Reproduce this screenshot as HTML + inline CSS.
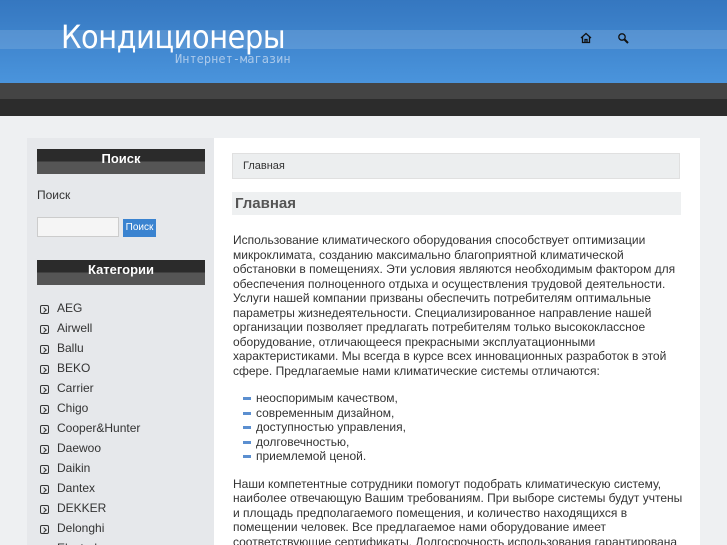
<!DOCTYPE html><html><head><meta charset="utf-8"><style>
html,body{margin:0;width:727px;height:545px;overflow:hidden;}
body{background:#eef0f2;font-family:"Liberation Sans","DejaVu Sans",sans-serif;position:relative;}
.hdr{position:absolute;left:0;top:0;width:727px;height:83px;background:linear-gradient(#3577c0,#4a94dc);}
.band{position:absolute;left:0;top:30px;width:727px;height:19px;background:rgba(255,255,255,.13);}
.title{position:absolute;left:61px;top:18px;color:#fff;font-size:32px;font-family:"DejaVu Sans Condensed","Liberation Sans Narrow",sans-serif;letter-spacing:-0.4px;}
.sub{position:absolute;left:175px;top:52px;color:#a9c8ea;font-size:12px;font-family:"DejaVu Sans Mono",monospace;}
.bar1{position:absolute;top:83px;left:0;width:727px;height:16px;background:#444;}
.bar2{position:absolute;top:99px;left:0;width:727px;height:17px;background:#2c2c2c;}
.side{position:absolute;left:27px;top:138px;width:187px;height:420px;background:#e6e8eb;}
.main{position:absolute;left:214px;top:138px;width:486px;height:420px;background:#fff;}
.sh{position:absolute;left:10px;width:168px;height:25px;background:linear-gradient(#2b2b2b 50%,#555 50%);color:#fff;font-weight:bold;font-size:13px;text-align:center;line-height:20px;}
.lbl{position:absolute;left:10px;top:50px;font-size:12px;color:#333;}
.inp{position:absolute;left:10px;top:79px;width:80px;height:18px;background:#f5f5f5;border:1px solid #ccc;}
.btn{position:absolute;left:96px;top:81px;width:33px;height:18px;background:#3a83d0;color:#fff;font-size:10px;line-height:18px;text-align:center;}
.cats{position:absolute;left:10px;top:162px;margin:0;padding:0;list-style:none;font-size:12px;color:#333;}
.cats li{height:20px;line-height:16px;position:relative;padding-left:20px;}
.cats li:before{content:"";position:absolute;left:3px;top:5px;width:7px;height:7px;border:1px solid #333;border-radius:2px;}
.cats li:after{content:"";position:absolute;left:5px;top:8px;width:3px;height:3px;border-top:1px solid #333;border-right:1px solid #333;transform:rotate(45deg);}
.bc{position:absolute;left:18px;top:15px;width:436px;height:24px;background:#eceeef;border:1px solid #e0e0e0;font-size:11px;line-height:24px;padding-left:10px;color:#333;}
.h1{position:absolute;left:18px;top:54px;width:446px;height:23px;background:#eef0f1;font-size:15px;font-weight:bold;color:#555;line-height:23px;padding-left:3px;}
.txt{position:absolute;left:19px;top:95px;width:452px;font-size:12px;line-height:14.5px;color:#333;}
.txt p{margin:0 0 13px;}
.txt ul{margin:0 0 13px;padding:0 0 0 10px;list-style:none;}
.txt li{padding-left:13px;position:relative;}
.txt li:before{content:"";position:absolute;left:0;top:6px;width:8px;height:3px;background:#5b8fd0;}
</style></head><body>
<div class="hdr"><div class="band"></div><div class="title">Кондиционеры</div><div class="sub">Интернет-магазин</div>
<svg style="position:absolute;left:580px;top:32px" width="12" height="12" viewBox="0 0 12 12"><path d="M1 6L6 1.5 11 6M2.5 5v5.5h7V5M5 10.5V7.5h2v3" fill="none" stroke="#111" stroke-width="1.3"/></svg>
<svg style="position:absolute;left:617px;top:32px" width="12" height="12" viewBox="0 0 12 12"><circle cx="5" cy="5" r="3.2" fill="none" stroke="#111" stroke-width="1.3"/><path d="M7.5 7.5L11 11" stroke="#111" stroke-width="2"/></svg>
</div>
<div class="bar1"></div><div class="bar2"></div>
<div class="side">
<div class="sh" style="top:11px">Поиск</div>
<div class="lbl">Поиск</div><div class="inp"></div><div class="btn">Поиск</div>
<div class="sh" style="top:122px">Категории</div>
<ul class="cats"><li>AEG</li><li>Airwell</li><li>Ballu</li><li>BEKO</li><li>Carrier</li><li>Chigo</li><li>Cooper&amp;Hunter</li><li>Daewoo</li><li>Daikin</li><li>Dantex</li><li>DEKKER</li><li>Delonghi</li><li>Electrolux</li></ul>
</div>
<div class="main">
<div class="bc">Главная</div>
<div class="h1">Главная</div>
<div class="txt"><p>Использование климатического оборудования способствует оптимизации микроклимата, созданию максимально благоприятной климатической обстановки в помещениях. Эти условия являются необходимым фактором для обеспечения полноценного отдыха и осуществления трудовой деятельности. Услуги нашей компании призваны обеспечить потребителям оптимальные параметры жизнедеятельности. Специализированное направление нашей организации позволяет предлагать потребителям только высококлассное оборудование, отличающееся прекрасными эксплуатационными характеристиками. Мы всегда в курсе всех инновационных разработок в этой сфере. Предлагаемые нами климатические системы отличаются:</p>
<ul><li>неоспоримым качеством,</li><li>современным дизайном,</li><li>доступностью управления,</li><li>долговечностью,</li><li>приемлемой ценой.</li></ul>
<p>Наши компетентные сотрудники помогут подобрать климатическую систему, наиболее отвечающую Вашим требованиям. При выборе системы будут учтены и площадь предполагаемого помещения, и количество находящихся в помещении человек. Все предлагаемое нами оборудование имеет соответствующие сертификаты. Долгосрочность использования гарантирована</p></div>
</div>
</body></html>
